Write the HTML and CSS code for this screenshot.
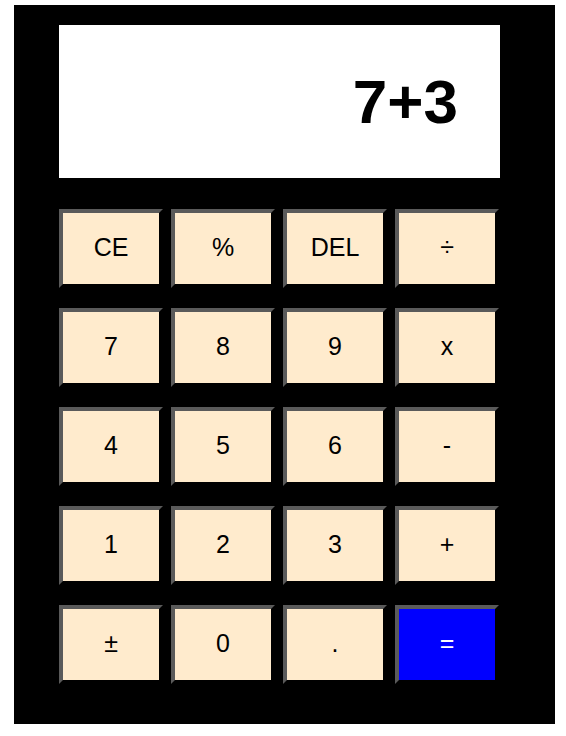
FILE: index.html
```html
<!DOCTYPE html>
<html>
<head>
<meta charset="utf-8">
<link rel="stylesheet" href="styles.css">
</head>
<body>
<div class="calc">
  <div class="display">7+3</div>
  <div class="keys">
    <button class="key">CE</button>
    <button class="key">%</button>
    <button class="key">DEL</button>
    <button class="key">÷</button>
    <button class="key">7</button>
    <button class="key">8</button>
    <button class="key">9</button>
    <button class="key">x</button>
    <button class="key">4</button>
    <button class="key">5</button>
    <button class="key">6</button>
    <button class="key">-</button>
    <button class="key">1</button>
    <button class="key">2</button>
    <button class="key">3</button>
    <button class="key">+</button>
    <button class="key">±</button>
    <button class="key">0</button>
    <button class="key">.</button>
    <button class="key key-equals">=</button>
  </div>
</div>
</body>
</html>
```
FILE: styles.css
```css
html, body {
  margin: 0;
  padding: 0;
  background: #fff;
}
body {
  padding: 5px 0 0 14px;
  font-family: "Liberation Sans", Arial, sans-serif;
}
.calc {
  box-sizing: border-box;
  width: 541px;
  height: 719px;
  background: #000;
  padding: 20px 55px 39px 45px;
}
.display {
  height: 153px;
  background: #fff;
  display: flex;
  align-items: center;
  justify-content: flex-end;
  padding-right: 42px;
  font-weight: bold;
  font-size: 62px;
  color: #000;
}
.keys {
  margin-top: 31px;
  display: grid;
  grid-template-columns: repeat(4, 104px);
  grid-auto-rows: 79px;
  column-gap: 8px;
  row-gap: 20px;
}
.key {
  box-sizing: border-box;
  margin: 0;
  padding: 0 0 3px;
  border: 4px solid;
  border-color: #5a5a5a #000 #000 #5a5a5a;
  background: #ffebcd;
  color: #000;
  font-family: "Liberation Sans", Arial, sans-serif;
  font-size: 25px;
}
.key-equals {
  background: #0000ff;
  color: #fff;
}
```
